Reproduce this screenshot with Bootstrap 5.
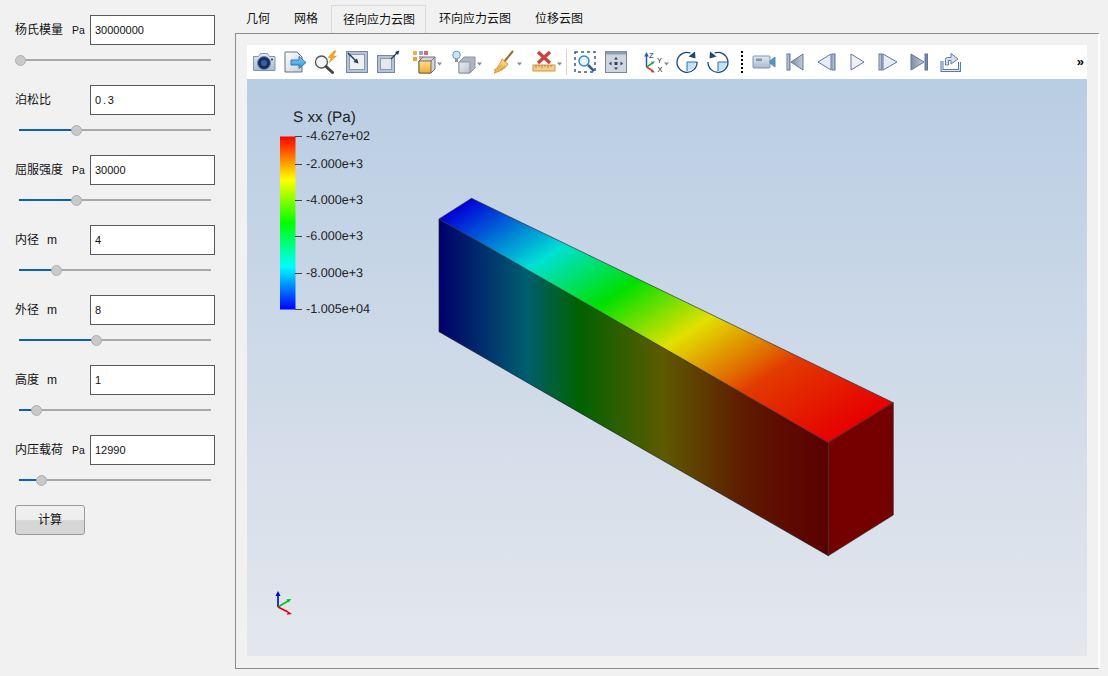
<!DOCTYPE html>
<html lang="zh">
<head>
<meta charset="utf-8">
<title>径向应力云图</title>
<link href="https://cdn.jsdelivr.net/npm/bootstrap@5.3.0/dist/css/bootstrap.min.css" rel="stylesheet">
<style>
html,body{height:100%;overflow:hidden}
body{background:#f1f1f1;color:#111;font-family:"Liberation Sans","Noto Sans CJK SC",sans-serif;font-size:12px;line-height:1.2}
.app{width:1108px;height:676px}
.side{width:235px;padding:15px 0 0 15px;flex:none}
.param{height:30px;width:200px}
.param-label{width:75px;font-family:"Liberation Sans","Noto Sans CJK SC",sans-serif;font-size:12px;white-space:nowrap}
.unit{margin-left:9px;font-size:10.5px}
.unit-m{margin-left:8px}
.param .form-control{width:125px;height:30px;flex:none;border:1px solid #5a5a5a;border-radius:0;padding:0 4px;font-size:11px;color:#111;background:#fff;font-family:"Liberation Sans",sans-serif}
.param .form-control:focus{box-shadow:none}
.param .spaced{letter-spacing:1.8px}
.slide-wrap{height:30px;margin-bottom:10px;padding-left:4px;display:flex;align-items:center}
.slide{-webkit-appearance:none;appearance:none;display:block;width:192px;height:30px;background:transparent;margin:0;padding:0}
.slide:focus{outline:0}
.slide::-webkit-slider-runnable-track{height:2px;background:linear-gradient(to right,#0a62b6 var(--fill),#a9a9a9 var(--fill))}
.slide::-webkit-slider-thumb{-webkit-appearance:none;appearance:none;width:11px;height:11px;margin-top:-4.5px;margin-left:-4px;border-radius:50%;background:#c9c9c9;border:1px solid #b0b0b0}
.calc{width:70px;height:30px;padding:0;font-size:12px;color:#111;border:1px solid #9a9a9a;border-radius:3px;background:linear-gradient(#f0f0f0 0,#ededed 50%,#d6d6d6 52%,#d6d6d6 100%);font-family:"Liberation Sans","Noto Sans CJK SC",sans-serif}
.main{width:865px;flex:none}
.tabs-row{height:33px;padding-top:5px;border:0;flex-wrap:nowrap}
.tabs-row .nav-link{height:28px;margin:0;padding:0 13px 0 11px;border:0;border-radius:0;background:transparent;color:#111;font-size:12px;line-height:26px;font-family:"Liberation Sans","Noto Sans CJK SC",sans-serif;white-space:nowrap}
.tabs-row .nav-link.active{width:95px;border:1px solid #d9d9d9;border-bottom:0;background:#f1f1f1;color:#111;padding:0 10px 0 11px;margin-right:2px}
.pane{width:865px;height:636px;padding:11px 11px 12px 11px;border:1px solid #8c8c8c;border-right:2px solid #fff;background:#f1f1f1;border-top-color:#8c8c8c}
.toolbar{height:34px;background:#fff;padding-left:5px;width:840px}
.toolbar svg{display:block;flex:none}
.more{margin-left:auto;margin-right:3px;font-size:13px;font-weight:700;color:#000;line-height:1;padding-bottom:2px}
.sepline{width:1px;height:26px;background:#d5d5d5;margin:0 6px 0 4px;flex:none}
.dots{width:2px;height:22px;margin:0 9px 0 11px;flex:none;background:repeating-linear-gradient(#000 0 2px,transparent 2px 4px)}
.g2{margin-left:2px}.g7{margin-left:7px}.g10{margin-left:10px}.g12{margin-left:12px}.g15{margin-left:15px}
.scene{display:block;width:840px;height:577px;background:linear-gradient(#b9cde3,#e4e7ed)}
.scene text{font-family:"Liberation Sans",sans-serif;fill:#222;text-rendering:geometricPrecision}
.axis-letter{font-family:"Liberation Sans",sans-serif;font-size:7.5px;fill:#222}
</style>
</head>
<body>
<svg width="0" height="0" class="position-absolute">
<defs>
<linearGradient id="ib" x1="0" y1="0" x2="0" y2="1"><stop offset="0" stop-color="#e2e9f2"/><stop offset="1" stop-color="#a9b9d0"/></linearGradient>
<linearGradient id="iw" x1="0" y1="0" x2="1" y2="1"><stop offset="0" stop-color="#fff"/><stop offset="1" stop-color="#c5cfdd"/></linearGradient>
<linearGradient id="ia" x1="0" y1="0" x2="0" y2="1"><stop offset="0" stop-color="#8fd0f5"/><stop offset="1" stop-color="#2c8fd6"/></linearGradient>
<linearGradient id="io" x1="0" y1="0" x2="0" y2="1"><stop offset="0" stop-color="#ffe08a"/><stop offset="1" stop-color="#f2a93a"/></linearGradient>
<linearGradient id="ig" x1="0" y1="0" x2="1" y2="1"><stop offset="0" stop-color="#eceff3"/><stop offset="1" stop-color="#b9c0ca"/></linearGradient>
<linearGradient id="ip" x1="0" y1="0" x2="1" y2="0"><stop offset="0" stop-color="#dde4ee"/><stop offset="1" stop-color="#8c9cb5"/></linearGradient>
<linearGradient id="ipr" x1="1" y1="0" x2="0" y2="0"><stop offset="0" stop-color="#c3ccd9"/><stop offset="1" stop-color="#7d8da6"/></linearGradient>
</defs>
</svg>
<div class="app d-flex">
  <aside class="side">
    <div class="param d-flex align-items-center"><label class="param-label">杨氏模量<span class="unit">Pa</span></label><input class="form-control" value="30000000"></div>
    <div class="slide-wrap"><input type="range" class="slide" min="0" max="181" value="0" style="--fill:0px"></div>
    <div class="param d-flex align-items-center"><label class="param-label">泊松比</label><input class="form-control spaced" value="0.3"></div>
    <div class="slide-wrap"><input type="range" class="slide" min="0" max="181" value="56" style="--fill:58px"></div>
    <div class="param d-flex align-items-center"><label class="param-label">屈服强度<span class="unit">Pa</span></label><input class="form-control" value="30000"></div>
    <div class="slide-wrap"><input type="range" class="slide" min="0" max="181" value="56" style="--fill:58px"></div>
    <div class="param d-flex align-items-center"><label class="param-label">内径<span class="unit-m">m</span></label><input class="form-control" value="4"></div>
    <div class="slide-wrap"><input type="range" class="slide" min="0" max="181" value="36" style="--fill:38px"></div>
    <div class="param d-flex align-items-center"><label class="param-label">外径<span class="unit-m">m</span></label><input class="form-control" value="8"></div>
    <div class="slide-wrap"><input type="range" class="slide" min="0" max="181" value="76" style="--fill:78px"></div>
    <div class="param d-flex align-items-center"><label class="param-label">高度<span class="unit-m">m</span></label><input class="form-control" value="1"></div>
    <div class="slide-wrap"><input type="range" class="slide" min="0" max="181" value="16" style="--fill:18px"></div>
    <div class="param d-flex align-items-center"><label class="param-label">内压载荷<span class="unit">Pa</span></label><input class="form-control" value="12990"></div>
    <div class="slide-wrap"><input type="range" class="slide" min="0" max="181" value="21" style="--fill:23px"></div>
    <button type="button" class="btn calc">计算</button>
  </aside>
  <main class="main">
    <ul class="nav nav-tabs tabs-row">
      <li class="nav-item"><button class="nav-link" type="button">几何</button></li>
      <li class="nav-item"><button class="nav-link" type="button">网格</button></li>
      <li class="nav-item"><button class="nav-link active" type="button">径向应力云图</button></li>
      <li class="nav-item"><button class="nav-link" type="button">环向应力云图</button></li>
      <li class="nav-item"><button class="nav-link" type="button">位移云图</button></li>
    </ul>
    <div class="pane">
      <div class="toolbar d-flex align-items-center">
        <!-- camera -->
        <svg width="24" height="24" viewBox="0 0 24 24"><path d="M1.500 6.500h5l2-3h7l2 3h5.500v14h-21.500z" fill="url(#ib)" stroke="#7f95b3"/><circle cx="12" cy="13" r="6.500" fill="#16305e" stroke="#6a86ad"/><circle cx="12" cy="13" r="3" fill="#3561a5"/><circle cx="20" cy="9.500" r="1" fill="#333"/></svg>
        <!-- save -->
        <svg class="g7" width="24" height="24" viewBox="0 0 24 24"><path d="M2 2h12l5 5v15H2z" fill="url(#iw)" stroke="#65707f"/><path d="M8 10h8V6.500l7 6-7 6V15H8z" fill="url(#ia)" stroke="#2a78bd"/></svg>
        <!-- zoom lightning -->
        <svg class="g7" width="24" height="24" viewBox="0 0 24 24"><circle cx="7.500" cy="12" r="6" fill="#f3f5f8" stroke="#555" stroke-width="1.300"/><path d="M12 16.500l6.500 6" stroke="#444" stroke-width="3" stroke-linecap="round"/><path d="M20 1l-6 6.500h3.500l-2.500 5 7.500-6.500h-3.500l3-5z" fill="#f6a623" stroke="#d98512" stroke-width=".5"/></svg>
        <!-- frame in -->
        <svg class="g7" width="24" height="24" viewBox="0 0 24 24"><rect x="1.500" y="1.500" width="21" height="21" fill="#b7c2d2" stroke="#7288a8"/><rect x="4.500" y="4.500" width="15" height="15" fill="#eef1f5" stroke="#8b9ab0"/><path d="M3 3l9 9" stroke="#22395f" stroke-width="1.500"/><path d="M13.500 13.500l-5-1.500 3.500-3.500z" fill="#22395f"/></svg>
        <!-- frame out -->
        <svg class="g7" width="24" height="24" viewBox="0 0 24 24"><rect x="1.500" y="5.500" width="17" height="17" fill="#b7c2d2" stroke="#7288a8"/><rect x="4.500" y="8.500" width="11" height="11" fill="#e4e8ee" stroke="#8b9ab0"/><path d="M15 9l6-6" stroke="#22395f" stroke-width="1.300"/><path d="M23.500.5l-1.500 4.500-3-3z" fill="#22395f"/></svg>
        <!-- box + palette -->
        <svg class="g12" width="30" height="24" viewBox="0 0 30 24"><rect x="1" y="1" width="4" height="4" fill="#f0b050"/><rect x="7" y="1" width="4" height="4" fill="#8fa8cf"/><rect x="12" y="1" width="4" height="4" fill="#d96868"/><rect x="1" y="7" width="4" height="4" fill="#e8a43a"/><rect x="7" y="6" width="4" height="3" fill="#cfa0a0"/><path d="M7 11l4-4h12v12l-4 4H7z" fill="#d2d6db" stroke="#6a7482"/><path d="M7 11h12v12H7z" fill="url(#io)" stroke="#7a6a42"/><path d="M19 11l4-4" stroke="#6a7482" fill="none"/><path d="M25 12.500h5l-2.500 3z" fill="#888"/></svg>
        <!-- light + box -->
        <svg class="g10" width="30" height="24" viewBox="0 0 30 24"><path d="M7 12l5-5h11v11l-5 5H7z" fill="#aeb5bf" stroke="#8c95a2"/><path d="M7 12h11v11H7z" fill="url(#ig)" stroke="#8c95a2"/><circle cx="4.500" cy="5" r="3.800" fill="#c9e4fb" stroke="#5f9bd5"/><path d="M3 9h3v3H3z" fill="#8c95a2"/><path d="M25 12.500h5l-2.500 3z" fill="#888"/></svg>
        <!-- broom -->
        <svg class="g10" width="30" height="24" viewBox="0 0 30 24"><path d="M21 1l-9 11" stroke="#9c6a2c" stroke-width="2"/><path d="M10 9l6 5c-2 4-7 7-14 9 2-1 1-3 0-3 3-1 6-6 8-11z" fill="url(#io)" stroke="#c68a2a" stroke-width=".8"/><path d="M5 19l5-4M8 20l5-4" stroke="#c68a2a" stroke-width=".7"/><path d="M25 12.500h5l-2.500 3z" fill="#888"/></svg>
        <!-- ruler x -->
        <svg class="g10" width="30" height="24" viewBox="0 0 30 24"><path d="M6 2l12 11M18 2L6 13" stroke="#c8453f" stroke-width="3.400"/><rect x="1" y="15" width="22" height="6" fill="#f4cf82" stroke="#c79a49"/><path d="M4 15v3M7 15v2M10 15v3M13 15v2M16 15v3M19 15v2" stroke="#9a7a3a" stroke-width=".8"/><path d="M25 12.500h5l-2.500 3z" fill="#888"/></svg>
        <span class="sepline"></span>
        <!-- dashed zoom -->
        <svg width="24" height="24" viewBox="0 0 24 24"><rect x="2" y="2" width="20" height="20" fill="none" stroke="#3d5a86" stroke-width="1.500" stroke-dasharray="3 3"/><circle cx="11" cy="11" r="5" fill="#e4f2fc" stroke="#3e84c4" stroke-width="1.500"/><path d="M15 15l6 6" stroke="#2d5f96" stroke-width="2.500"/></svg>
        <!-- fit -->
        <svg class="g7" width="24" height="24" viewBox="0 0 24 24"><rect x="1.500" y="1.500" width="21" height="21" fill="#d0d6de" stroke="#76869e"/><rect x="1.500" y="1.500" width="21" height="3" fill="#8d9cb3"/><g fill="#2d3f5c"><path d="M12 7l2 2.500h-4zM12 20l2-2.500h-4zM5 13.500l2.500-2v4zM19 13.500l-2.500-2v4z"/><rect x="10.500" y="12" width="3" height="3"/></g></svg>
        <!-- axes -->
        <svg class="g15" width="30" height="24" viewBox="0 0 30 24"><path d="M3.500 17V6" stroke="#2456c6" stroke-width="1.500"/><path d="M3.500 2l2.300 4.500h-4.600z" fill="#2456c6"/><path d="M3.500 17l6-3.800" stroke="#20a040" stroke-width="1.500"/><path d="M12 11.500l-4 .2 1.600 2.800z" fill="#20a040"/><path d="M3.500 17l6 3.600" stroke="#e03030" stroke-width="1.500"/><path d="M12 22.500l-4.200-.2 1.600-2.800z" fill="#e03030"/><text class="axis-letter" x="6" y="7.500">Z</text><text class="axis-letter" x="14" y="13">Y</text><text class="axis-letter" x="14.500" y="22">X</text><path d="M21 12.500h5l-2.500 3z" fill="#888"/></svg>
        <!-- rotate cw -->
        <svg class="g2" width="24" height="24" viewBox="0 0 24 24"><path d="M12 12h9a9.500 9.500 0 0 1-9 9z" fill="#bfe3f8"/><path d="M12 12v9M12 12h10" stroke="#2d6fb0"/><path d="M15.500 3A10 10 0 1 0 22 12" fill="none" stroke="#1f4570" stroke-width="1.300"/><path d="M20 1.500l.5 7-7-2z" fill="#1f4570"/></svg>
        <!-- rotate ccw -->
        <svg class="g7" width="24" height="24" viewBox="0 0 24 24"><path d="M12 12v9a9.500 9.500 0 0 0 9-9z" fill="#bfe3f8"/><path d="M12 12v9M12 12h10" stroke="#2d6fb0"/><path d="M8.500 3A10 10 0 1 1 2 12" fill="none" stroke="#1f4570" stroke-width="1.300"/><path d="M4 1.500l-.5 7 7-2z" fill="#1f4570"/></svg>
        <span class="dots"></span>
        <!-- video camera -->
        <svg width="24" height="24" viewBox="0 0 24 24"><rect x="1" y="6" width="17" height="12" rx="1" fill="url(#ib)" stroke="#7f93ae"/><rect x="4" y="8.500" width="6" height="2.500" fill="#8495ac"/><path d="M18 11l5-4v10l-5-4z" fill="#4b97c9" stroke="#6a88a8"/></svg>
        <!-- first -->
        <svg class="g7" width="24" height="24" viewBox="0 0 24 24"><rect x="4" y="4" width="3" height="16" fill="url(#ip)" stroke="#60779a"/><path d="M20 4v16L8 12z" fill="url(#ipr)" stroke="#60779a"/></svg>
        <!-- prev -->
        <svg class="g7" width="24" height="24" viewBox="0 0 24 24"><path d="M17 4v16L4 12z" fill="#e8edf4" stroke="#60779a"/><rect x="18" y="4" width="3" height="16" fill="url(#ip)" stroke="#60779a"/></svg>
        <!-- play -->
        <svg class="g7" width="24" height="24" viewBox="0 0 24 24"><path d="M6 4v16l13-8z" fill="#eef2f7" stroke="#60779a"/></svg>
        <!-- next -->
        <svg class="g7" width="24" height="24" viewBox="0 0 24 24"><rect x="3" y="4" width="3" height="16" fill="url(#ip)" stroke="#60779a"/><path d="M7 4v16l14-8z" fill="#e8edf4" stroke="#60779a"/></svg>
        <!-- last -->
        <svg class="g7" width="24" height="24" viewBox="0 0 24 24"><path d="M4 4v16l13-8z" fill="url(#ipr)" stroke="#60779a"/><rect x="18" y="4" width="2.500" height="16" fill="#7488a8" stroke="#60779a"/></svg>
        <!-- loop -->
        <svg class="g7" width="24" height="24" viewBox="0 0 24 24"><path d="M4 11v9.500h17.500V12" fill="none" stroke="#5c7ca6" stroke-width="3"/><path d="M4 11v9.500h17.500V12" fill="none" stroke="#dde6f1" stroke-width="1"/><path d="M7.500 15V9.500q0-2 2-2H13V3.500l7 5.500-7 5V10.500H10.500V15z" fill="#d3e0ef" stroke="#5c7ca6"/></svg>
        <span class="more">»</span>
      </div>
      <svg class="scene" viewBox="247 79 840 577">
        <defs>
          <linearGradient id="front" gradientUnits="userSpaceOnUse" x1="439" y1="0" x2="828" y2="0">
            <stop offset="0" stop-color="#00006c"/><stop offset=".04" stop-color="#00106a"/><stop offset=".225" stop-color="#005e6e"/><stop offset=".36" stop-color="#006200"/><stop offset=".575" stop-color="#5e5a00"/><stop offset=".78" stop-color="#5e1c00"/><stop offset=".88" stop-color="#5e0c00"/><stop offset="1" stop-color="#5a0000"/>
          </linearGradient>
          <linearGradient id="top" gradientUnits="userSpaceOnUse" x1="439" y1="219" x2="658.600" y2="553.700">
            <stop offset="0" stop-color="#0000d8"/><stop offset=".226" stop-color="#00e0d4"/><stop offset=".4" stop-color="#00e000"/><stop offset=".577" stop-color="#e2e000"/><stop offset=".72" stop-color="#e07000"/><stop offset=".78" stop-color="#e23a00"/><stop offset="1" stop-color="#e60000"/>
          </linearGradient>
          <linearGradient id="cbar" x1="0" y1="0" x2="0" y2="1">
            <stop offset="0" stop-color="#f00"/><stop offset=".25" stop-color="#ff0"/><stop offset=".5" stop-color="#0f0"/><stop offset=".75" stop-color="#0ff"/><stop offset="1" stop-color="#00f"/>
          </linearGradient>
        </defs>
        <path d="M439 219L828.300 442.700V555.700L439 331.700z" fill="url(#front)" stroke="#20202a" stroke-width=".7"/>
        <path d="M439 219L471.500 198.300L893.300 402.700L828.300 442.700z" fill="url(#top)" stroke="#30303a" stroke-width=".7"/>
        <path d="M828.300 442.700L893.300 402.700V515L828.300 555.700z" fill="#750000" stroke="#3a3030" stroke-width=".7"/>
        <text x="293" y="122" font-size="15.300">S xx (Pa)</text>
        <rect x="280" y="136.500" width="15.500" height="173" fill="url(#cbar)"/>
        <g stroke="#444" stroke-width="1"><path d="M295 136.500h7M295 164.500h7M295 200.500h7M295 236.500h7M295 273.500h7M295 309.500h7"/></g>
        <g font-size="12.600">
          <text x="306" y="140">-4.627e+02</text>
          <text x="306" y="168">-2.000e+3</text>
          <text x="306" y="204">-4.000e+3</text>
          <text x="306" y="240">-6.000e+3</text>
          <text x="306" y="277">-8.000e+3</text>
          <text x="306" y="313">-1.005e+04</text>
        </g>
        <path d="M278 607V595" stroke="#0000e0" stroke-width="1.600"/><path d="M278 591l2.500 5h-5z" fill="#0000e0"/>
        <path d="M278 607l10-6" stroke="#00c020" stroke-width="1.600"/><path d="M291.500 599l-5 .3 1.800 3.200z" fill="#00c020"/>
        <path d="M278 607l10 5" stroke="#e00000" stroke-width="1.600"/><path d="M292 614l-5.200.8 1.500-3.300z" fill="#e00000"/>
      </svg>
    </div>
  </main>
</div>
</body>
</html>
